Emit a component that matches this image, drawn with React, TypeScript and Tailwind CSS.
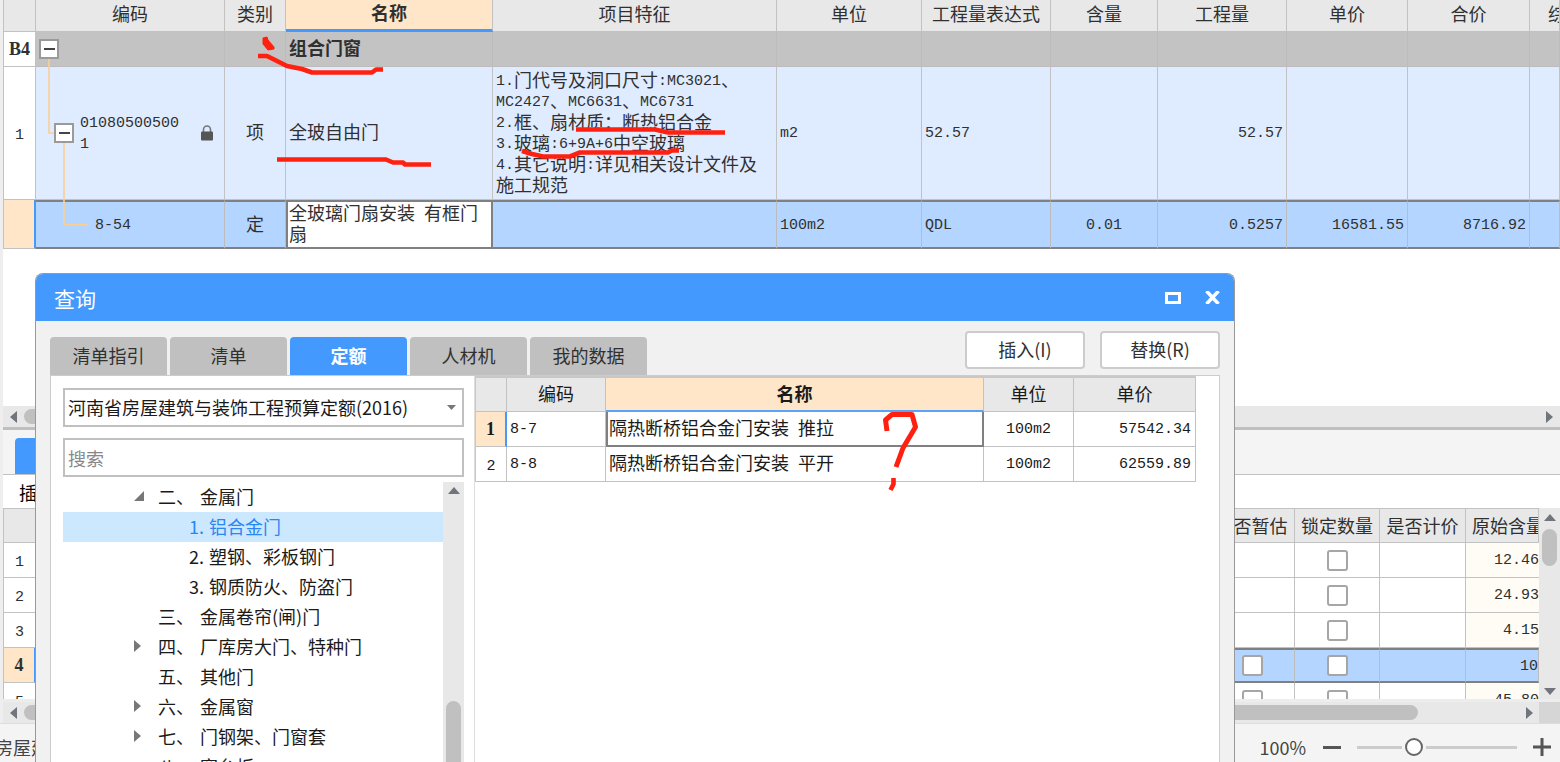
import type { ReactNode } from "react";

type Align = "left" | "center" | "right";

const alignClass: Record<Align, string> = {
  left: "text-left",
  center: "text-center",
  right: "text-right",
};

const itemColumns: { title: string; width: string; align: Align }[] = [
  { title: "单位", width: "w-[145px]", align: "left" },
  { title: "工程量表达式", width: "w-[129px]", align: "left" },
  { title: "含量", width: "w-[107px]", align: "center" },
  { title: "工程量", width: "w-[129px]", align: "right" },
  { title: "单价", width: "w-[121px]", align: "right" },
  { title: "合价", width: "w-[122px]", align: "right" },
];

const itemValues = ["m2", "52.57", "", "52.57", "", ""];
const quotaValues = ["100m2", "QDL", "0.01", "0.5257", "16581.55", "8716.92"];

const features = [
  "1.门代号及洞口尺寸:MC3021、",
  "MC2427、MC6631、MC6731",
  "2.框、扇材质：断热铝合金",
  "3.玻璃:6+9A+6中空玻璃",
  "4.其它说明:详见相关设计文件及",
  "施工规范",
];

const tabs = ["清单指引", "清单", "定额", "人材机", "我的数据"];

const quotas = [
  { code: "8-7", name: "隔热断桥铝合金门安装 推拉", unit: "100m2", price: "57542.34" },
  { code: "8-8", name: "隔热断桥铝合金门安装 平开", unit: "100m2", price: "62559.89" },
];

const tree: { no: string; name: string; state?: "open" | "closed"; child?: boolean; active?: boolean }[] = [
  { no: "二、", name: "金属门", state: "open" },
  { no: "1.", name: "铝合金门", child: true, active: true },
  { no: "2.", name: "塑钢、彩板钢门", child: true },
  { no: "3.", name: "钢质防火、防盗门", child: true },
  { no: "三、", name: "金属卷帘(闸)门" },
  { no: "四、", name: "厂库房大门、特种门", state: "closed" },
  { no: "五、", name: "其他门" },
  { no: "六、", name: "金属窗", state: "closed" },
  { no: "七、", name: "门钢架、门窗套", state: "closed" },
  { no: "八、", name: "窗台板" },
];

const details = [
  { no: 1, amount: "12.46" },
  { no: 2, amount: "24.93" },
  { no: 3, amount: "4.15" },
  { no: 4, amount: "10", active: true, estimate: true },
  { no: 5, amount: "45.80", estimate: true },
];

// Latin runs are set in a half-width mono face next to full-width characters
function Mix({ text }: { text: string }) {
  return (
    <>
      {text.split(/([\x20-\x7e]+)/).map((part, i) =>
        i % 2 === 1 ? (
          <span key={i} className="align-[2px] font-['Liberation_Mono',monospace] text-[15px] leading-none">
            {part}
          </span>
        ) : (
          part
        )
      )}
    </>
  );
}

function Triangle({ dir, className = "" }: { dir: "left" | "right" | "up" | "down"; className?: string }) {
  const points = {
    left: "7,0 7,12 0,6",
    right: "0,0 0,12 7,6",
    up: "0,7 12,7 6,0",
    down: "0,0 12,0 6,7",
  }[dir];
  const wide = dir === "up" || dir === "down";
  return (
    <svg width={wide ? 12 : 7} height={wide ? 7 : 12} className={`block fill-[#70757d] ${className}`}>
      <polygon points={points} />
    </svg>
  );
}

function Collapse({ label }: { label: string }) {
  return (
    <button
      aria-label={label}
      className="flex h-5 w-5 shrink-0 items-center justify-center border-2 border-[#9a9a9a] bg-white"
    >
      <span className="h-0.5 w-[11px] bg-[#444]" />
    </button>
  );
}

function Th({ children, className = "" }: { children?: ReactNode; className?: string }) {
  return (
    <th className={`overflow-hidden border-b border-r border-[#c2c2c2] bg-[#e8e8e8] p-0 font-normal whitespace-nowrap ${className}`}>
      {children}
    </th>
  );
}

function ItemTable() {
  const line = "border-b border-r border-[#c2c2c2]";
  const group = "border-r border-b border-[#bcbcbc] bg-[#c3c3c3] p-0";
  const picked = "border-y-2 border-r border-y-[#808080] border-r-[#bcbcbc] bg-[#b3d5ff]";
  return (
    <table className="w-full table-fixed border-separate border-spacing-0 border-l border-[#c2c2c2] text-lg leading-[21px] text-[#303030]">
      <colgroup>
        <col className="w-8" />
        <col className="w-[189px]" />
        <col className="w-[61px]" />
        <col className="w-[207px]" />
        <col className="w-[284px]" />
        {itemColumns.map((c) => (
          <col key={c.title} className={c.width} />
        ))}
        <col />
      </colgroup>
      <thead>
        <tr className="h-8">
          <Th />
          <Th className="pb-1">编码</Th>
          <Th className="pb-1">类别</Th>
          <th className="border-r border-b-3 border-r-[#c2c2c2] border-b-[#4499ff] bg-[#ffe6c8] p-0 pb-1 font-bold">名称</th>
          <Th className="pb-1">项目特征</Th>
          {itemColumns.map((c) => (
            <Th key={c.title} className="pb-1">
              {c.title}
            </Th>
          ))}
          <Th className="pb-1 pl-[18px] text-left">综合单价</Th>
        </tr>
      </thead>
      <tbody>
        <tr className="h-[35px]">
          <td className={`${line} bg-white p-0 text-center font-['Liberation_Serif',serif] font-bold`}>B4</td>
          <td className={`${group} pl-[3px]`}>
            <Collapse label="折叠 B4" />
          </td>
          <td className={group} />
          <td className={`${group} pb-[3px] pl-[3px] font-bold`}>组合门窗</td>
          <td className={group} />
          {itemColumns.map((c) => (
            <td key={c.title} className={group} />
          ))}
          <td className={group} />
        </tr>
        <tr className="h-[133px] bg-[#dfebff]">
          <td className={`${line} bg-white p-0 text-center`}>
            <Mix text="1" />
          </td>
          <td className={`${line} p-0`}>
            <div className="flex items-center pl-[18px]">
              <Collapse label="折叠 1" />
              <span className="ml-1.5 w-[102px] pb-[3px] break-all">
                <Mix text="010805005001" />
              </span>
              <svg width="14" height="16" viewBox="0 0 14 16" className="ml-[18px] shrink-0">
                <path d="M3.5 7V4.5a3.5 3.5 0 0 1 7 0V7" fill="none" stroke="#777" strokeWidth="1.6" />
                <rect x="1" y="6.5" width="12" height="9" rx="1" fill="#555" />
              </svg>
            </div>
          </td>
          <td className={`${line} p-0 pb-[3px] text-center`}>项</td>
          <td className={`${line} p-0 pb-[3px] pl-[3px]`}>全玻自由门</td>
          <td className={`${line} p-0 pb-[3px] pl-[3px] whitespace-nowrap`}>
            {features.map((f) => (
              <div key={f} className="h-[21px]">
                <Mix text={f} />
              </div>
            ))}
          </td>
          {itemColumns.map((c, i) => (
            <td key={c.title} className={`${line} px-[3px] pt-0 pb-[3px] ${alignClass[c.align]}`}>
              <Mix text={itemValues[i]} />
            </td>
          ))}
          <td className={line} />
        </tr>
        <tr className="h-[49px]">
          <td className="border-r-2 border-b border-b-[#c2c2c2] border-r-[#4499ff] bg-[#ffe6c8]" />
          <td className={`${picked} p-0 pb-[3px] pl-[59px]`}>
            <Mix text="8-54" />
          </td>
          <td className={`${picked} p-0 pb-[3px] text-center`}>定</td>
          <td className="border-2 border-[#808080] bg-white p-0 pb-[3px] pl-px">
            <Mix text="全玻璃门扇安装 有框门扇" />
          </td>
          <td className={picked} />
          {itemColumns.map((c, i) => (
            <td key={c.title} className={`${picked} px-[3px] pt-0 pb-[3px] ${alignClass[c.align]}`}>
              <Mix text={quotaValues[i]} />
            </td>
          ))}
          <td className={picked} />
        </tr>
      </tbody>
    </table>
  );
}

function TreeLines() {
  return (
    <svg width="100" height="250" className="pointer-events-none absolute top-0 left-0" fill="none" stroke="#fbcf94" strokeWidth="1.6">
      <path d="M49 59V133H54M64 143V224.500H88" />
    </svg>
  );
}

function Check({ label }: { label: string }) {
  return (
    <input
      type="checkbox"
      aria-label={label}
      className="block h-[21px] w-[21px] appearance-none rounded-[3px] border-2 border-[#a6a6a6] bg-white"
    />
  );
}

function DetailTable() {
  const line = "border-b border-r border-[#c2c2c2]";
  const picked = "border-y-2 border-r border-y-[#808080] border-r-[#bcbcbc] bg-[#b3d5ff]";
  return (
    <div className="h-[191px] flex-1 overflow-hidden">
      <table className="w-full table-fixed border-separate border-spacing-0 border-t border-l border-[#c2c2c2] text-lg leading-[21px] text-[#303030]">
        <colgroup>
          <col className="w-8" />
          <col />
          <col className="w-[86px]" />
          <col className="w-[85px]" />
          <col className="w-[86px]" />
          <col className="w-[73px]" />
        </colgroup>
        <thead>
          <tr className="h-[34px]">
            <Th />
            <Th />
            <Th>是否暂估</Th>
            <Th>锁定数量</Th>
            <Th>是否计价</Th>
            <Th className="pl-1.5 text-left">原始含量</Th>
          </tr>
        </thead>
        <tbody>
          {details.map((d) => {
            const cell = d.active ? picked : line;
            return (
              <tr key={d.no} className="h-[35px]">
                <td
                  className={
                    d.active
                      ? "border-r-2 border-b border-r-[#4499ff] border-b-[#c2c2c2] bg-[#ffe6c8] p-0 text-center font-['Liberation_Serif',serif] font-bold"
                      : `${line} p-0 text-center`
                  }
                >
                  {d.active ? d.no : <Mix text={String(d.no)} />}
                </td>
                <td className={cell} />
                <td className={`${cell} p-0 pl-[33px]`}>{d.estimate && <Check label={`是否暂估 ${d.no}`} />}</td>
                <td className={`${cell} p-0 pl-8`}>
                  <Check label={`锁定数量 ${d.no}`} />
                </td>
                <td className={cell} />
                <td className={`${d.active ? picked : "border-b border-[#c2c2c2] bg-[#fffbf5]"} p-0 pb-[3px] text-right`}>
                  <Mix text={d.amount} />
                </td>
              </tr>
            );
          })}
        </tbody>
      </table>
    </div>
  );
}

function StatusBar() {
  return (
    <footer className="flex h-[39px] shrink-0 items-center justify-between border-t border-[#ddd] bg-[#f4f4f4] pt-2 pr-[9px] text-lg text-[#444]">
      <span className="-ml-[5px] whitespace-nowrap">房屋建筑与装饰工程</span>
      <div className="flex items-center">
        <label htmlFor="zoom" className="mr-[17px]">
          100%
        </label>
        <button aria-label="缩小" className="flex h-5 w-[18px] items-center">
          <span className="h-[3px] w-full bg-[#555]" />
        </button>
        <input
          id="zoom"
          type="range"
          defaultValue={34}
          className="mx-4 h-5 w-40 appearance-none bg-transparent [&::-webkit-slider-runnable-track]:h-[3px] [&::-webkit-slider-runnable-track]:bg-[#ccc] [&::-webkit-slider-thumb]:-mt-2 [&::-webkit-slider-thumb]:h-[18px] [&::-webkit-slider-thumb]:w-[18px] [&::-webkit-slider-thumb]:appearance-none [&::-webkit-slider-thumb]:rounded-full [&::-webkit-slider-thumb]:border-2 [&::-webkit-slider-thumb]:border-[#666] [&::-webkit-slider-thumb]:bg-white [&::-webkit-slider-thumb]:shadow-[0_0_0_3px_#f4f4f4]"
        />
        <button aria-label="放大">
          <svg width="18" height="18" className="block stroke-[#555]" strokeWidth="3">
            <path d="M0 9H18M9 0V18" />
          </svg>
        </button>
      </div>
    </footer>
  );
}

function QuotaTree() {
  return (
    <div className="mt-[5px] flex min-h-0 flex-1">
      <ul className="min-w-0 flex-1 overflow-hidden">
        {tree.map((n) => (
          <li
            key={n.no + n.name}
            className={`flex h-[30px] items-center pb-0.5 ${n.active ? "bg-[#cce8ff] text-[#2a86f0]" : "text-[#1a1a1a]"} ${n.child ? "pl-[126px]" : "pl-[71px]"}`}
          >
            {!n.child && (
              <span className="w-6">
                {n.state === "open" && (
                  <svg width="10" height="10" className="fill-[#777]">
                    <polygon points="10,0 10,10 0,10" />
                  </svg>
                )}
                {n.state === "closed" && (
                  <svg width="7" height="12" className="fill-[#777]">
                    <polygon points="0,0 7,6 0,12" />
                  </svg>
                )}
              </span>
            )}
            <span className={n.child ? "w-5" : "w-[42px]"}>{n.no}</span>
            <span>{n.name}</span>
          </li>
        ))}
      </ul>
      <div className="flex w-[21px] flex-col items-center bg-[#e8e8e8]">
        <Triangle dir="up" className="mt-[5px]" />
        <div className="mt-[207px] w-[15px] flex-1 rounded-t-full bg-[#c0c0c0]" />
      </div>
    </div>
  );
}

function QuotaTable() {
  const line = "border-b border-r border-[#c2c2c2]";
  return (
    <table className="w-[721px] table-fixed border-separate border-spacing-0 border-t-2 border-l border-[#c8c8c8] text-lg leading-[21px] text-[#1a1a1a]">
      <colgroup>
        <col className="w-[31px]" />
        <col className="w-[99px]" />
        <col />
        <col className="w-[90px]" />
        <col className="w-[122px]" />
      </colgroup>
      <thead>
        <tr className="h-[34px]">
          <Th />
          <Th className="pb-0.5">编码</Th>
          <th className="border-r border-b-2 border-r-[#c2c2c2] border-b-[#5aa2f5] bg-[#ffe6c8] p-0 pb-0.5 font-bold">名称</th>
          <Th className="pb-0.5">单位</Th>
          <Th className="pb-0.5">单价</Th>
        </tr>
      </thead>
      <tbody>
        {quotas.map((q, i) => (
          <tr key={q.code} className="h-[35px]">
            <td
              className={
                i === 0
                  ? "border-r-2 border-b border-r-[#4499ff] border-b-[#c2c2c2] bg-[#ffe6c8] p-0 text-center font-['Liberation_Serif',serif] font-bold"
                  : `${line} p-0 text-center`
              }
            >
              {i === 0 ? 1 : <Mix text={String(i + 1)} />}
            </td>
            <td className={`${line} p-0 pb-[3px] pl-[3px]`}>
              <Mix text={q.code} />
            </td>
            <td className={`p-0 pb-[3px] ${i === 0 ? "border-r-2 border-b-2 border-l-2 border-[#808080] pl-px" : `${line} pl-[3px]`}`}>
              <Mix text={q.name} />
            </td>
            <td className={`${line} p-0 pb-[3px] text-center`}>
              <Mix text={q.unit} />
            </td>
            <td className={`${line} p-0 pr-1 pb-[3px] text-right`}>
              <Mix text={q.price} />
            </td>
          </tr>
        ))}
      </tbody>
    </table>
  );
}

function QueryDialog() {
  return (
    <section
      role="dialog"
      aria-labelledby="query-title"
      className="absolute top-[273px] right-[325px] bottom-0 left-[35px] flex flex-col overflow-hidden rounded-t-lg border-x border-t border-[#999] bg-[#f1f1f1] text-lg"
    >
      <header className="flex h-[47px] shrink-0 items-center justify-between bg-[#4499ff] pr-3.5 pl-[18px] text-white">
        <h2 id="query-title" className="pt-0.5 text-[21px]">
          查询
        </h2>
        <div className="flex items-center gap-6">
          <button aria-label="最大化" className="h-3 w-4 border-3 border-white" />
          <button aria-label="关闭">
            <svg width="15" height="13" className="block stroke-white" strokeWidth="3.5">
              <path d="M1.500 0L13.500 13M13.500 0L1.500 13" />
            </svg>
          </button>
        </div>
      </header>
      <div className="flex h-[54px] shrink-0 justify-between pr-3.5 pl-3.5">
        <div className="flex items-end gap-[3px]">
          {tabs.map((t) => (
            <button
              key={t}
              className={`h-[38px] w-[117px] rounded-t pb-0.5 ${t === "定额" ? "bg-[#4499ff] font-bold text-white" : "bg-[#c0c0c0] text-[#303030]"}`}
            >
              {t}
            </button>
          ))}
        </div>
        <div className="flex gap-[15px] pt-2.5 text-[#303030]">
          <button className="h-[38px] w-[120px] rounded border-2 border-[#ccc] bg-white pb-0.5">插入(I)</button>
          <button className="h-[38px] w-[120px] rounded border-2 border-[#ccc] bg-white pb-0.5">替换(R)</button>
        </div>
      </div>
      <div className="mx-3.5 flex min-h-0 flex-1 border border-b-0 border-[#ccc] bg-white">
        <div className="flex w-[423px] shrink-0 flex-col pt-3 pr-2.5 pl-3">
          <div className="relative shrink-0">
            <select
              aria-label="定额库"
              className="block h-[39px] w-full appearance-none border-2 border-[#c0c0c0] bg-white pb-px pl-[3px] text-lg text-[#1a1a1a]"
            >
              <option>河南省房屋建筑与装饰工程预算定额(2016)</option>
            </select>
            <svg width="9" height="5" className="pointer-events-none absolute top-[17px] right-2 fill-[#777]">
              <polygon points="0,0 9,0 4.5,5" />
            </svg>
          </div>
          <input
            type="text"
            aria-label="搜索"
            placeholder="搜索"
            className="mt-[11px] block h-[39px] w-full shrink-0 border-2 border-[#c0c0c0] bg-white pl-[3px] text-lg placeholder:text-[#888]"
          />
          <QuotaTree />
        </div>
        <div className="min-w-0 flex-1 border-l border-[#ddd]">
          <QuotaTable />
        </div>
      </div>
    </section>
  );
}

// Red pen strokes over the sheet
function Ink() {
  return (
    <svg width="960" height="500" className="pointer-events-none absolute top-0 left-0" fill="none" stroke="#ff2010" strokeWidth="4.6" strokeLinejoin="round">
      <polygon points="263,38 267,37 268,40 274,47 274,49 268,50 263,44" fill="#ff2010" strokeWidth="1" />
      <path d="M258 56H267L287 66L302 69L312 72.500H372L376 69.500H383" />
      <path d="M277 159.500H386L393 162.500H403L405 164.500H431" />
      <path d="M576 129.500H655L668 132.500H725" />
      <path d="M522 151L532 154L543 156.500H570L580 152.500H668L672 150.500H679" />
      <path d="M887 431L885.500 420L892 414.500H912L915.500 427L903 448L896 467" strokeWidth="5" />
      <path d="M893.500 478V484L890.500 490" />
    </svg>
  );
}

export default function App() {
  return (
    <div className="relative flex h-screen flex-col overflow-hidden bg-white font-['Noto_Sans_CJK_SC',sans-serif]">
      <div className="flex flex-1 flex-col border-l-3 border-[#eee]">
        <ItemTable />
        <div className="flex-1" />
        <div className="flex h-[21px] shrink-0 items-center justify-between bg-[#e8e8e8] px-[7px]">
          <div className="flex flex-1 items-center gap-[7px]">
            <Triangle dir="left" />
            <div className="h-[15px] w-3/5 rounded-full bg-[#c0c0c0]" />
          </div>
          <Triangle dir="right" />
        </div>
        <div className="flex h-[48px] shrink-0 items-end border-t-3 border-b border-t-[#bfbfbf] border-b-[#c2c2c2] bg-[#f4f4f4] pl-3">
          <button aria-label="明细" className="h-9 w-[117px] rounded-t bg-[#4499ff]" />
        </div>
        <div className="flex h-[33px] shrink-0 items-center pl-4 text-lg">
          <button>插入</button>
        </div>
        <div className="flex shrink-0">
          <DetailTable />
          <div className="flex w-[21px] flex-col items-center bg-[#e8e8e8] pt-1.5 pb-1">
            <Triangle dir="up" />
            <div className="mt-2 h-[37px] w-[15px] rounded-full bg-[#c0c0c0]" />
            <div className="flex-1" />
            <Triangle dir="down" />
          </div>
        </div>
        <div className="flex h-[24px] shrink-0 border-t-3 border-[#ededed] bg-[#e8e8e8]">
          <div className="flex flex-1 items-center gap-[7px] pl-[7px]">
            <Triangle dir="left" />
            <div className="mr-[101px] h-[15px] flex-1 rounded-full bg-[#c0c0c0]" />
            <Triangle dir="right" className="mr-1.5" />
          </div>
          <div className="w-[21px] bg-[#d6d6d6]" />
        </div>
      </div>
      <StatusBar />
      <TreeLines />
      <QueryDialog />
      <Ink />
    </div>
  );
}
